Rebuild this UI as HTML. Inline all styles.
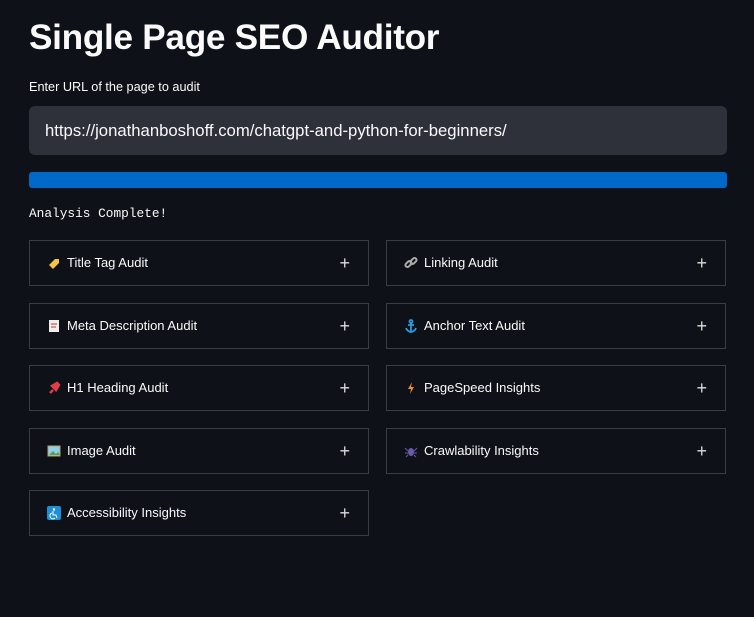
<!DOCTYPE html>
<html><head><meta charset="utf-8"><style>
body{margin:0;background:#0e1117;width:754px;height:617px;overflow:hidden;font-family:"Liberation Sans",sans-serif;color:#fafafa;position:relative}
h1{position:absolute;left:29px;top:18px;margin:0;font-size:35.2px;font-weight:bold;letter-spacing:-0.3px}
.lbl{position:absolute;left:29px;top:80px;font-size:12.7px}
.inp{position:absolute;left:29px;top:106px;width:698px;height:49px;background:#2e303a;border-radius:6px;box-sizing:border-box;padding-left:16px;line-height:49px;font-size:16.7px}
.bar{position:absolute;left:29px;top:172px;width:698px;height:16px;background:#0068c9;border-radius:3px}
.done{position:absolute;left:29px;top:206px;font-family:"Liberation Mono",monospace;font-size:12.8px}
.box{position:absolute;width:340px;height:46px;border:1px solid #3b3d44;box-sizing:border-box;font-size:13px}
.box .t{position:absolute;left:37px;top:14px}
.box .ic{position:absolute;left:17px;top:15px;width:14px;height:14px}
.box .p{position:absolute;right:18px;top:13px;font-size:18px;line-height:18px;color:#ddd}
</style></head><body>
<h1>Single Page SEO Auditor</h1>
<div class="lbl">Enter URL of the page to audit</div>
<div class="inp">https://jonathanboshoff.com/chatgpt-and-python-for-beginners/</div>
<div class="bar"></div>
<div class="done">Analysis Complete!</div>

<div class="box" style="left:29px;top:240px"><svg class="ic" viewBox="0 0 14 14"><path d="M2 9l6-6h4v4l-6 6z" fill="#f4c542"/></svg><span class="t">Title Tag Audit</span><span class="p">+</span></div>
<div class="box" style="left:386px;top:240px"><svg class="ic" viewBox="0 0 14 14"><g fill="none" stroke="#aaa" stroke-width="2"><rect x="1" y="6" width="7" height="4" rx="2" transform="rotate(-45 4.5 8)"/><rect x="6" y="3" width="7" height="4" rx="2" transform="rotate(-45 9.5 5)"/></g></svg><span class="t">Linking Audit</span><span class="p">+</span></div>

<div class="box" style="left:29px;top:303px"><svg class="ic" viewBox="0 0 14 14"><rect x="2" y="1" width="10" height="12" fill="#eee"/><path d="M4 5h6M4 8h5" stroke="#c33" stroke-width="1"/></svg><span class="t">Meta Description Audit</span><span class="p">+</span></div>
<div class="box" style="left:386px;top:303px"><svg class="ic" viewBox="0 0 14 14"><g fill="none" stroke="#2b9be0" stroke-width="1.8"><circle cx="7" cy="2.5" r="1.5"/><path d="M7 4v9M4 6h6M2 9c1 3 4 4 5 4s4-1 5-4"/></g></svg><span class="t">Anchor Text Audit</span><span class="p">+</span></div>

<div class="box" style="left:29px;top:365px"><svg class="ic" viewBox="0 0 14 14"><path d="M3 12l3-3M5 5l4 4 3-5-2-2z" stroke="#e23c4a" stroke-width="2.5" fill="#e23c4a"/></svg><span class="t">H1 Heading Audit</span><span class="p">+</span></div>
<div class="box" style="left:386px;top:365px"><svg class="ic" viewBox="0 0 14 14"><path d="M8 1L4 8h3l-1 5 4-7H7z" fill="#f08a2c"/></svg><span class="t">PageSpeed Insights</span><span class="p">+</span></div>

<div class="box" style="left:29px;top:428px"><svg class="ic" viewBox="0 0 14 14"><rect x="1" y="2" width="12" height="10" fill="#8ed0f0" stroke="#c89a5a"/><path d="M2 11l4-4 3 3 2-2 2 3z" fill="#5aa04a"/></svg><span class="t">Image Audit</span><span class="p">+</span></div>
<div class="box" style="left:386px;top:428px"><svg class="ic" viewBox="0 0 14 14"><ellipse cx="7" cy="8" rx="3" ry="4" fill="#6a5aa8"/><path d="M1 4l3 3M13 4l-3 3M1 9h3M13 9h-3M2 13l2-2M12 13l-2-2" stroke="#6a5aa8"/></svg><span class="t">Crawlability Insights</span><span class="p">+</span></div>

<div class="box" style="left:29px;top:490px"><svg class="ic" viewBox="0 0 14 14"><rect width="14" height="14" rx="2" fill="#1c8fd6"/><circle cx="7" cy="3.5" r="1.2" fill="#fff"/><path d="M6 5v4h3l1 3M5 7a3 3 0 1 0 3 5" stroke="#fff" fill="none"/></svg><span class="t">Accessibility Insights</span><span class="p">+</span></div>
</body></html>
